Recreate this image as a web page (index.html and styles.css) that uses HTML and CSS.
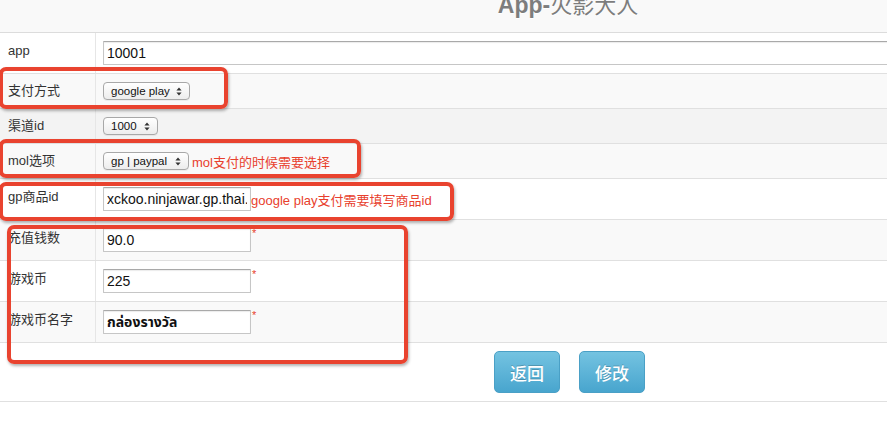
FILE: index.html
```html
<!DOCTYPE html>
<html lang="zh">
<head>
<meta charset="utf-8">
<title>App-火影大人</title>
<link rel="stylesheet" href="styles.css">
</head>
<body>
<div class="sheet">
  <div class="head"><h1 class="title">App-<span class="cjk">火影大人</span></h1></div>

  <div class="row">
    <div class="label">app</div>
    <div class="value"><input class="field wide" value="10001"></div>
  </div>
  <div class="row alt short">
    <div class="label">支付方式</div>
    <div class="value"><span class="select s-gp">google play<svg class="arr" width="6" height="9" viewBox="0 0 6 9"><path d="M3 0.5L5.6 3.6H0.4Z M3 8.5L5.6 5.4H0.4Z" fill="#333"/></svg></span></div>
  </div>
  <div class="row hover short">
    <div class="label">渠道id</div>
    <div class="value"><span class="select s-ch">1000<svg class="arr" width="6" height="9" viewBox="0 0 6 9"><path d="M3 0.5L5.6 3.6H0.4Z M3 8.5L5.6 5.4H0.4Z" fill="#333"/></svg></span></div>
  </div>
  <div class="row alt short">
    <div class="label">mol选项</div>
    <div class="value"><span class="select s-mol">gp | paypal<svg class="arr" width="6" height="9" viewBox="0 0 6 9"><path d="M3 0.5L5.6 3.6H0.4Z M3 8.5L5.6 5.4H0.4Z" fill="#333"/></svg></span><span class="note">mol支付的时候需要选择</span></div>
  </div>
  <div class="row">
    <div class="label">gp商品id</div>
    <div class="value"><input class="field" value="xckoo.ninjawar.gp.thai.item1"><span class="note tight">google play支付需要填写商品id</span></div>
  </div>
  <div class="row alt">
    <div class="label">充值钱数</div>
    <div class="value"><input class="field" value="90.0"><span class="req">*</span></div>
  </div>
  <div class="row">
    <div class="label">游戏币</div>
    <div class="value"><input class="field" value="225"><span class="req">*</span></div>
  </div>
  <div class="row alt">
    <div class="label">游戏币名字</div>
    <div class="value"><input class="field thai" value="กล่องรางวัล"><span class="req">*</span></div>
  </div>

  <div class="actions">
    <button class="btn">返回</button>
    <button class="btn">修改</button>
  </div>
</div>

<div class="mark m1"></div>
<div class="mark m2"></div>
<div class="mark m3"></div>
<div class="mark m4"></div>
</body>
</html>
```
FILE: styles.css
```css
html, body {
  margin: 0;
  padding: 0;
  background: #fff;
  overflow: hidden;
}
body {
  position: relative;
  width: 887px;
  height: 441px;
  font-family: "Liberation Sans", Arial, "Noto Sans CJK SC", sans-serif;
  font-size: 13px;
  color: #333;
}
.sheet {
  width: 1136px;
}
.head {
  height: 32px;
  background: #f9f9f9;
  border-bottom: 1px solid #dcdcdc;
  overflow: hidden;
  text-align: center;
}
.title {
  margin: -10px 0 0;
  font-size: 23px;
  line-height: 26px;
  font-weight: bold;
  color: #7d7d7d;
  text-shadow: 0 1px 0 #fff;
}
.title .cjk {
  font-weight: normal;
  font-family: "Noto Sans CJK SC", sans-serif;
  font-size: 22px;
}
.row {
  display: grid;
  grid-template-columns: 96px 1fr;
  border-bottom: 1px solid #e0e0e0;
  background: #fff;
}
.row.alt { background: #f9f9f9; }
.row.hover { background: #f3f3f3; }
.label {
  border-right: 1px solid #e6e6e6;
  padding: 8px 0 8px 8px;
  line-height: 20px;
  font-size: 13px;
  color: #333;
}
.row.short .label { padding: 7px 0 7px 8px; }
.value {
  padding: 8px 7px;
  display: flex;
  align-items: center;
  height: 24px;
}
.row.short .value { height: 18px; }
.field {
  box-sizing: border-box;
  width: 148px;
  height: 24px;
  margin: 0;
  padding: 0 3px;
  border: 1px solid #c6c6c6;
  border-top-color: #a9a9a9;
  border-radius: 1px;
  box-shadow: inset 0 1px 1px rgba(0,0,0,0.08);
  font-family: "Liberation Sans", Arial, sans-serif;
  font-size: 14px;
  color: #111;
  background: #fff;
  outline: none;
}
.field.wide { width: 1000px; }
.field.thai {
  font-family: "Noto Sans Thai", "Tlwg Typo", "Loma", "Garuda", "DejaVu Sans", sans-serif;
  font-weight: bold;
}
.select {
  box-sizing: border-box;
  display: inline-flex;
  align-items: center;
  justify-content: space-between;
  height: 18px;
  padding: 0 7px 0 7px;
  border: 1px solid #a8a8a8;
  border-radius: 4px;
  background: linear-gradient(#ffffff, #ededed);
  box-shadow: 0 1px 0 rgba(0,0,0,0.05);
  font-family: "Liberation Sans", Arial, sans-serif;
  font-size: 11.5px;
  color: #111;
  white-space: pre;
}
.s-gp { width: 87px; }
.s-ch { width: 55px; }
.s-mol { width: 86px; }
.arr { flex: none; }
.note {
  margin-left: 3px;
  color: #e8402d;
  font-size: 13px;
  white-space: nowrap;
}
.note.tight { margin-left: 0; }
.req {
  align-self: flex-start;
  margin-left: 1px;
  color: #e8402d;
  font-size: 11px;
  line-height: 11px;
}
.actions {
  display: flex;
  gap: 19px;
  padding: 8px 0 8px 494px;
  border-bottom: 1px solid #e0e0e0;
}
.btn {
  box-sizing: border-box;
  height: 42px;
  padding: 0 15px;
  border: 1px solid #4aa0c6;
  border-radius: 5px;
  background: linear-gradient(#74c3e1, #48a5ce);
  color: #fff;
  font-family: "Noto Sans CJK SC", sans-serif;
  font-size: 17px;
  font-weight: 500;
  text-shadow: 0 -1px 0 rgba(0,0,0,0.2);
}
.mark {
  position: absolute;
  box-sizing: border-box;
  border: 4px solid #e9432f;
  border-radius: 7px;
  box-shadow: 1px 2px 3px rgba(0,0,0,0.3);
}
.m1 { left: -1px; top: 67px; width: 229px; height: 42px; }
.m2 { left: -1px; top: 139px; width: 362px; height: 39px; }
.m3 { left: -1px; top: 182px; width: 455px; height: 39px; }
.m4 { left: 7px; top: 225px; width: 401px; height: 139px; }
```
